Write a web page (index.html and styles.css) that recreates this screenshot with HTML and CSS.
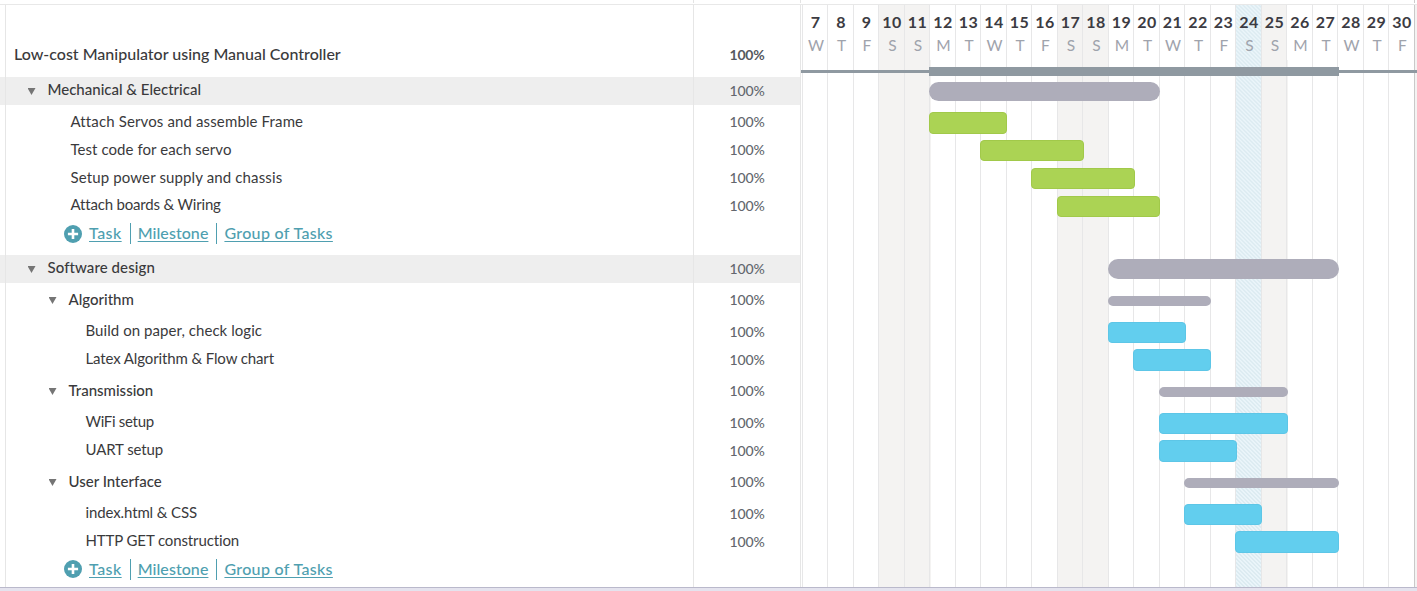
FILE: index.html
```
<!DOCTYPE html>
<html lang="en">
<head>
<meta charset="utf-8">
<title>Project schedule</title>
<link rel="stylesheet" href="styles.css">
</head>
<body>
<div class="strip"><i class="strip-name"></i><i class="strip-pct"></i><i class="strip-chart"></i></div>
<main class="sheet">
  <div class="days">
    <div class="day"><b>7</b><span>W</span></div>
    <div class="day"><b>8</b><span>T</span></div>
    <div class="day"><b>9</b><span>F</span></div>
    <div class="day off"><b>10</b><span>S</span></div>
    <div class="day off"><b>11</b><span>S</span></div>
    <div class="day after-off"><b>12</b><span>M</span></div>
    <div class="day"><b>13</b><span>T</span></div>
    <div class="day"><b>14</b><span>W</span></div>
    <div class="day"><b>15</b><span>T</span></div>
    <div class="day"><b>16</b><span>F</span></div>
    <div class="day off"><b>17</b><span>S</span></div>
    <div class="day off"><b>18</b><span>S</span></div>
    <div class="day"><b>19</b><span>M</span></div>
    <div class="day"><b>20</b><span>T</span></div>
    <div class="day"><b>21</b><span>W</span></div>
    <div class="day"><b>22</b><span>T</span></div>
    <div class="day"><b>23</b><span>F</span></div>
    <div class="day today"><b>24</b><span>S</span></div>
    <div class="day off"><b>25</b><span>S</span></div>
    <div class="day after-off"><b>26</b><span>M</span></div>
    <div class="day"><b>27</b><span>T</span></div>
    <div class="day"><b>28</b><span>W</span></div>
    <div class="day"><b>29</b><span>T</span></div>
    <div class="day"><b>30</b><span>F</span></div>
    <div class="day-end"></div>
  </div>

  <div class="rows">
    <div class="row title"><div class="name">Low-cost Manipulator using Manual Controller</div><div class="pct">100%</div><div class="track"><i class="span-line"></i><i class="span-bar odd" style="grid-column:6/22"></i></div></div>

    <div class="row group"><div class="name"><i class="arrow"></i>Mechanical &amp; Electrical</div><div class="pct">100%</div><div class="track"><i class="bar" style="grid-column:6/15"></i></div></div>
    <div class="row task first"><div class="name">Attach Servos and assemble Frame</div><div class="pct">100%</div><div class="track"><i class="bar green tall" style="grid-column:6/9"></i></div></div>
    <div class="row task"><div class="name snug">Test code for each servo</div><div class="pct">100%</div><div class="track"><i class="bar green up odd" style="grid-column:8/12"></i></div></div>
    <div class="row task short"><div class="name">Setup power supply and chassis</div><div class="pct">100%</div><div class="track"><i class="bar green up odd" style="grid-column:10/14"></i></div></div>
    <div class="row task long"><div class="name tight">Attach boards &amp; Wiring</div><div class="pct">100%</div><div class="track"><i class="bar green" style="grid-column:11/15"></i></div></div>
    <div class="row add">
      <svg class="plus" viewBox="0 0 18 18"><circle cx="9" cy="9" r="9"/><path d="M9 3.9v10.2M3.9 9h10.2"/></svg>
      <a class="t">Task</a><a class="m">Milestone</a><a class="g">Group of Tasks</a>
    </div>

    <div class="row group second"><div class="name"><i class="arrow"></i>Software design</div><div class="pct">100%</div><div class="track"><i class="bar odd" style="grid-column:13/22"></i></div></div>

    <div class="row sub first"><div class="name"><i class="arrow"></i>Algorithm</div><div class="pct">100%</div><div class="track"><i class="bar" style="grid-column:13/17"></i></div></div>
    <div class="row task deep first"><div class="name loose">Build on paper, check logic</div><div class="pct">100%</div><div class="track"><i class="bar blue odd" style="grid-column:13/16"></i></div></div>
    <div class="row task deep"><div class="name">Latex Algorithm &amp; Flow chart</div><div class="pct">100%</div><div class="track"><i class="bar blue tall" style="grid-column:14/17"></i></div></div>

    <div class="row sub"><div class="name"><i class="arrow"></i>Transmission</div><div class="pct">100%</div><div class="track"><i class="bar odd" style="grid-column:15/20"></i></div></div>
    <div class="row task deep first"><div class="name tight">WiFi setup</div><div class="pct">100%</div><div class="track"><i class="bar blue odd" style="grid-column:15/20"></i></div></div>
    <div class="row task deep"><div class="name">UART setup</div><div class="pct">100%</div><div class="track"><i class="bar blue tall odd" style="grid-column:15/18"></i></div></div>

    <div class="row sub"><div class="name"><i class="arrow"></i>User Interface</div><div class="pct">100%</div><div class="track"><i class="bar odd" style="grid-column:16/22"></i></div></div>
    <div class="row task deep first"><div class="name">index.html &amp; CSS</div><div class="pct">100%</div><div class="track"><i class="bar blue" style="grid-column:16/19"></i></div></div>
    <div class="row task deep"><div class="name">HTTP GET construction</div><div class="pct">100%</div><div class="track"><i class="bar blue tall odd" style="grid-column:18/22"></i></div></div>
    <div class="row add last">
      <svg class="plus" viewBox="0 0 18 18"><circle cx="9" cy="9" r="9"/><path d="M9 3.9v10.2M3.9 9h10.2"/></svg>
      <a class="t">Task</a><a class="m">Milestone</a><a class="g">Group of Tasks</a>
    </div>
  </div>

  <div class="guides"><i></i><i></i><i></i></div>
</main>
<footer class="foot"></footer>
</body>
</html>
```
FILE: styles.css
```
* { box-sizing: border-box; }
body {
  margin: 0;
  width: 1417px;
  height: 591px;
  overflow: hidden;
  background: #fff;
  color: #3a3a3c;
  font: 15px "Lato", sans-serif;
}
i { display: block; font-style: normal; }

/* strip above the table */
.strip { display: grid; grid-template-columns: 694px 107px 614px; height: 5px; border-bottom: 1px solid #e8e8e8; }
.strip i { height: 3px; border-right: 1px solid #e4e4e4; }
.strip .strip-chart { border-color: #ccc; }

.sheet { display: grid; height: 582px; grid-template-columns: 1417px; }
.days, .rows, .guides { grid-area: 1 / 1; }

/* calendar columns */
.days {
  display: grid;
  grid-template-columns: repeat(12, 25px 26px) 3px;
  padding-left: 802px;
}
.day {
  display: flex;
  flex-direction: column;
  align-items: center;
  border-left: 1px solid #e7e7e8;
  padding-top: 6px;
  white-space: nowrap;
}
.day b { margin: 0 -2px 0 -1px; font-size: 16px; line-height: 22px; letter-spacing: .4px; color: #3c3b42; }
.day span { margin-top: 1px; padding-left: 2px; font-size: 15.5px; line-height: 22px; color: #9fa3ac; }
.off { background: #f4f3f2; }
.after-off { background: linear-gradient(#f4f3f2, #f4f3f2) 0 55px / 1px 100% no-repeat; }
.today {
  background-color: #ebf5fa;
  background-image: repeating-linear-gradient(45deg, #dcebf1 0 .8px, #ebf5fa 1.5px 2.2px, #dcebf1 2.83px);
}
.day-end { background: #f4f3f2; border-left: 1px solid #c9c9c9; }

/* vertical rules of the task table, drawn over the tinted rows */
.guides { display: grid; grid-template-columns: 6px 688px 107px; pointer-events: none; }
.guides i { border-right: 1px solid #e6e6e6; }

/* rows */
.row { display: grid; grid-template-columns: 694px 107px 616px; height: 28px; line-height: 28px; white-space: nowrap; }
.name { line-height: 26px; }
.track { display: grid; grid-template-columns: repeat(12, 25px 26px); padding-left: 1px; align-items: start; }
.pct { padding-right: 1px; text-align: center; font-size: 14px; font-weight: 500; letter-spacing: -.1px; color: #63676e; }

.title { height: 72px; }
.title .name { padding: 36px 0 0 14px; font-size: 16px; font-weight: 500; }
.title .pct { padding-top: 36px; font-weight: 700; letter-spacing: -.2px; color: #55595f; }
.span-line { grid-row: 1; grid-column: 1 / -1; margin: 65px -3px 0 -1px; height: 3px; background: #8f99a1; }
.span-bar { grid-row: 1; margin: 62px -1px 0 0; height: 9px; background: #8f99a1; }

.group { background: linear-gradient(#eee, #eee) 0 0 / 800px 100% no-repeat; }
.group .name, .sub .name { display: flex; font-weight: 500; }
.group .name { padding-left: 27.5px; gap: 12px; line-height: 24px; }
.sub .name { padding-left: 48.5px; gap: 12px; }
.arrow { width: 8px; height: 7px; margin-top: 11px; background: #757575; clip-path: polygon(0 0, 100% 0, 50% 100%); }
.group.second { margin-top: 7px; }
.second .name { letter-spacing: .08px; }
.sub { margin-top: 4px; }
.first { margin-top: 3px; }

.task .name { padding-left: 70.5px; letter-spacing: .13px; }
.task .name.snug { letter-spacing: .06px; }
.task .name.tight { letter-spacing: -.18px; }
.task.deep .name { padding-left: 85.5px; letter-spacing: -.12px; }
.task.deep .name.loose { letter-spacing: .06px; }
.task.deep .name.tight { letter-spacing: -.3px; }
.deep .pct { padding-top: 1px; }
.task.short { height: 27px; }
.task.long { height: 29px; }
.long .pct { padding-top: 1px; }

/* bars */
.bar { height: 21px; margin: 5px -1px 0 0; border-radius: 4px; }
.bar.odd, .span-bar.odd { margin-right: -2px; }
.bar.up { margin-top: 4px; }
.bar.tall { margin-top: 4px; height: 22px; }
.green { background: #abd354; border: 1px solid #a1c94a; }
.blue { background: #62ceee; border: 1px solid #5dc6e7; }
.group .bar { height: 19px; border-radius: 10px; background: #aeadba; }
.second .bar { height: 20px; margin-top: 4px; }
.sub .bar { height: 10px; margin-top: 10px; border-radius: 5px; background: #aeadba; }

/* add links */
.row.add { display: flex; align-items: flex-start; padding-left: 64px; font-size: 16px; font-weight: 500; color: #4f9fb0; line-height: 25px; }
.row.add.last { line-height: 27px; }
.plus { width: 18px; height: 18px; margin: 5px 7px 0 0; fill: #4f9fb0; }
.plus path { stroke: #fff; stroke-width: 2.6; }
.add a { text-decoration: underline; text-decoration-skip-ink: none; text-underline-offset: 2px; text-decoration-thickness: 1px; }
.add a + a::before {
  content: "";
  display: inline-block;
  width: 1px;
  height: 21px;
  margin: 0 7px 0 8px;
  vertical-align: -5px;
  background: #4f9fb0;
}
.add .t { letter-spacing: .45px; }
.add .m { letter-spacing: .06px; }
.add .g { letter-spacing: .33px; }

.foot { height: 4px; border-top: 1px solid #bab9cb; background: #e4e3ee; }
```
